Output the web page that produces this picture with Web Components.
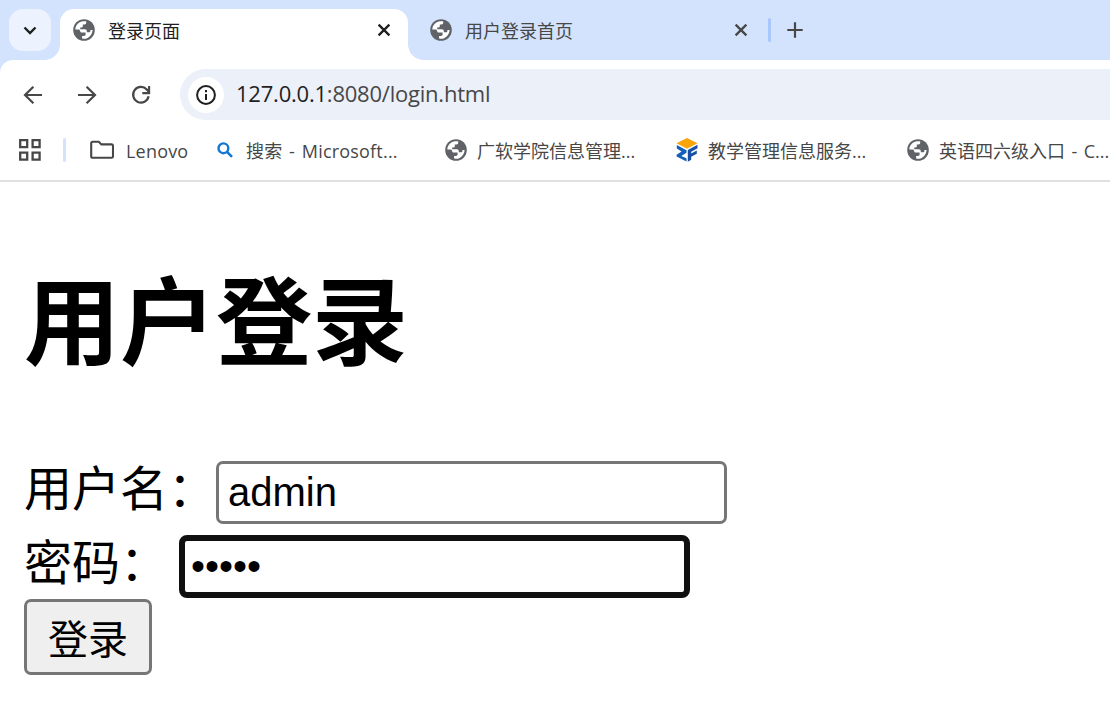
<!DOCTYPE html>
<html lang="zh-CN">
<head>
<meta charset="utf-8">
<title>登录页面</title>
<style>
    body {
        margin: 0;
        background: #fff;
        overflow: hidden;
        font-family: "Open Sans", "Noto Sans CJK SC", sans-serif;
    }
</style>
</head>
<body>
<browser-window>
    <tab-strip slot="tabs">
        <browser-tab active>登录页面</browser-tab>
        <browser-tab>用户登录首页</browser-tab>
    </tab-strip>
    <address-bar slot="toolbar" host="127.0.0.1" path=":8080/login.html"></address-bar>
    <bookmark-bar slot="bookmarks">
        <bookmark-item icon="folder" style="width: 127px; letter-spacing: .2px">Lenovo</bookmark-item>
        <bookmark-item icon="search" style="width: 228px; letter-spacing: .2px">搜索 - Microsoft...</bookmark-item>
        <bookmark-item icon="globe" style="width: 231px">广软学院信息管理...</bookmark-item>
        <bookmark-item icon="zf" style="width: 231px">教学管理信息服务...</bookmark-item>
        <bookmark-item icon="globe" style="width: 220px">英语四六级入口 - C...</bookmark-item>
    </bookmark-bar>
    <login-page></login-page>
</browser-window>

<script>
// Every icon is drawn in its own viewBox at its real pixel size
const ICONS = {
    chevron: [42, 42, '<path d="M15.5 18.5l5.5 5.5 5.5-5.5" fill="none" stroke="#1f1f1f" stroke-width="2.4"/>'],
    globe: [22, 22, `<circle cx="11" cy="11" r="10.8" fill="#5f6368"/>
        <path d="M2.3 10.4C2.6 6 6 2.5 10.3 2.3h2.9v1.4c0 1-.7 1.7-1.7 1.7h-1.7v1.8c0 .8-.6 1.2-1.3 1.2H7.2v1.8h4.6c1.3 0 2 .8 2 2v1.1h2.1c.9 0 1.5-.6 1.5-1.4v-1h2.2c-.4 5-4 8.8-8.5 8.8-.6 0-1.3-.1-2-.3v-2.5h1.7c1.2 0 1.8-.8 1.8-1.7v-1.7H8.9c-1 0-1.7-.7-1.7-1.6l-.9-1.3z" fill="#fff"/>`],
    close: [16, 16, '<path d="M2.6 2.6l10.8 10.8M13.4 2.6L2.6 13.4" stroke="currentColor" stroke-width="2.3"/>'],
    plus: [16, 16, '<path d="M8 .3v15.4M.3 8h15.4" stroke="#474747" stroke-width="2.2"/>'],
    back: [20, 20, '<path d="M19 10H2.5M10.4 1.7L2 10l8.4 8.3" fill="none" stroke="#474747" stroke-width="2.2"/>'],
    forward: [20, 20, '<path d="M1 10h16.5M9.6 1.7L18 10l-8.4 8.3" fill="none" stroke="#474747" stroke-width="2.2"/>'],
    reload: [20, 20, '<path d="M17.6 11.3A7.8 7.8 0 1 1 15.8 4.6L18 7" fill="none" stroke="#474747" stroke-width="2.2"/><path d="M18.1 1v7.1H11.3" fill="none" stroke="#474747" stroke-width="2.1"/>'],
    info: [20, 20, '<circle cx="10" cy="10" r="8.9" fill="none" stroke="#1f1f1f" stroke-width="2"/><path d="M10 9v6M10 5v2.2" stroke="#1f1f1f" stroke-width="2"/>'],
    apps: [22, 22, '<path d="M1.2 1.2h7v7h-7zM13.6 1.2h7v7h-7zM1.2 13.6h7v7h-7zM13.6 13.6h7v7h-7z" fill="none" stroke="#474747" stroke-width="2.3"/>'],
    folder: [24, 20, '<path d="M2.6 1.8h6.2l2.600 2.600h10.200q1.400 0 1.400 1.400v10.600q0 1.400-1.400 1.400H2.600q-1.400 0-1.400-1.400V3.200q0-1.400 1.400-1.400z" fill="none" stroke="#474747" stroke-width="2.1"/>'],
    search: [16, 16, '<circle cx="6.4" cy="6.3" r="4.9" fill="none" stroke="#1477d1" stroke-width="2.4"/><path d="M10 9.900l5 5" stroke="#1477d1" stroke-width="2.7"/>'],
    zf: [22, 24, `<path d="M11 0l10.500 5.200L11 10.800.5 5.200z" fill="#f9a408"/>
        <path d="M.8 7l9.700 5.200v2.600L5.300 18l5.200 2.200v3.300L.6 18.400v-1.700l5-3.200L.8 10.400z" fill="#1260b8"/>
        <path d="M21.500 6.800v3.500l-6.300 3.500v1.700l5.600-3v3.300l-5.600 3v3l-3.400 2V12z" fill="#174fa5"/>`]
};

class UiIcon extends HTMLElement {
    constructor() {
        super();
        this.attachShadow({ mode: 'open' });
    }

    connectedCallback() {
        const [width, height, shapes] = ICONS[this.getAttribute('name')];
        this.shadowRoot.innerHTML = `
        <style>
            :host { display: block; flex: none; }
            svg { display: block; }
        </style>
        <svg width="${width}" height="${height}" viewBox="0 0 ${width} ${height}">${shapes}</svg>`;
    }
}

class BrowserWindow extends HTMLElement {
    constructor() {
        super();
        this.attachShadow({ mode: 'open' });
        this.shadowRoot.innerHTML = `
        <style>
            :host { display: block; width: 1110px; height: 725px; overflow: hidden; }
            .chrome { background: #d3e3fd; }
            .bars {
                height: 120px;
                background: #fff;
                border-top-left-radius: 13px;
                border-bottom: 2px solid #e0e0e0;
                box-sizing: content-box;
            }
        </style>
        <div class="chrome">
            <slot name="tabs"></slot>
            <div class="bars">
                <slot name="toolbar"></slot>
                <slot name="bookmarks"></slot>
            </div>
        </div>
        <slot></slot>`;
    }
}

class TabStrip extends HTMLElement {
    constructor() {
        super();
        this.attachShadow({ mode: 'open' });
        this.shadowRoot.innerHTML = `
        <style>
            :host { display: flex; align-items: flex-start; height: 51px; padding: 9px 0 0 9px; }
            .search { width: 42px; height: 42px; margin-right: 9px; border-radius: 14px; background: #ecf2fe; }
            .divider { width: 3px; height: 24px; margin: 9px 16px 0 11px; border-radius: 2px; background: #a8c7fa; }
            .plus { margin-top: 13px; }
        </style>
        <div class="search"><ui-icon name="chevron"></ui-icon></div>
        <slot></slot>
        <div class="divider"></div>
        <ui-icon class="plus" name="plus"></ui-icon>`;
    }
}

class BrowserTab extends HTMLElement {
    constructor() {
        super();
        this.attachShadow({ mode: 'open' });
        this.shadowRoot.innerHTML = `
        <style>
            :host {
                display: flex;
                align-items: center;
                box-sizing: border-box;
                width: 348px;
                height: 51px;
                padding: 0 16px 9px 13px;
                font-size: 18px;
                line-height: 24px;
                color: #474747;
            }
            :host([active]) {
                background: #fff;
                border-radius: 14px 14px 0 0;
                color: #1f1f1f;
                position: relative;
            }
            :host(:not([active])) { padding: 0 8px 9px 22px; width: 349px; }
            .label { flex: 1; margin-left: 13px; padding-top: 2px; white-space: nowrap; }
            /* flared feet of the active tab */
            :host([active])::before, :host([active])::after {
                content: "";
                position: absolute;
                bottom: 0;
                width: 15px;
                height: 15px;
            }
            :host([active])::before {
                left: -15px;
                background: radial-gradient(circle at 0 0, transparent 14.5px, #fff 15px);
            }
            :host([active])::after {
                right: -15px;
                background: radial-gradient(circle at 100% 0, transparent 14.5px, #fff 15px);
            }
        </style>
        <ui-icon name="globe"></ui-icon>
        <span class="label"><slot></slot></span>
        <ui-icon name="close"></ui-icon>`;
    }
}

class AddressBar extends HTMLElement {
    constructor() {
        super();
        this.attachShadow({ mode: 'open' });
    }

    connectedCallback() {
        this.shadowRoot.innerHTML = `
        <style>
            :host { display: flex; align-items: center; height: 51px; padding: 9px 0 0 23px; }
            .forward { margin: 0 34px; }
            .pill {
                display: flex;
                align-items: center;
                flex: 1;
                height: 51px;
                margin-left: 29px;
                padding-left: 8px;
                border-radius: 26px 0 0 26px;
                background: #ebf0f9;
            }
            .info {
                display: grid;
                place-items: center;
                width: 36px;
                height: 36px;
                border-radius: 50%;
                background: #fff;
            }
            .url {
                margin-left: 12px;
                padding-bottom: 3px;
                font-size: 22px;
                line-height: 30px;
                letter-spacing: -.22px;
                color: #474747;
                white-space: nowrap;
            }
            .host { color: #1f1f1f; }
        </style>
        <ui-icon name="back"></ui-icon>
        <ui-icon class="forward" name="forward"></ui-icon>
        <ui-icon name="reload"></ui-icon>
        <div class="pill">
            <div class="info"><ui-icon name="info"></ui-icon></div>
            <div class="url"><span class="host">${this.getAttribute('host')}</span>${this.getAttribute('path')}</div>
        </div>`;
    }
}

class BookmarkBar extends HTMLElement {
    constructor() {
        super();
        this.attachShadow({ mode: 'open' });
        this.shadowRoot.innerHTML = `
        <style>
            :host { display: flex; align-items: center; height: 60px; padding-left: 19px; }
            .divider { flex: none; width: 3px; height: 24px; margin: 0 24px 0 22px; border-radius: 2px; background: #d3e3fd; }
        </style>
        <ui-icon name="apps"></ui-icon>
        <div class="divider"></div>
        <slot></slot>`;
    }
}

class BookmarkItem extends HTMLElement {
    constructor() {
        super();
        this.attachShadow({ mode: 'open' });
    }

    connectedCallback() {
        const icon = this.getAttribute('icon');
        const gap = { folder: 12, search: 13, globe: 10, zf: 10 }[icon];
        this.shadowRoot.innerHTML = `
        <style>
            :host {
                display: flex;
                align-items: center;
                flex: none;
                font-size: 18px;
                line-height: 24px;
                word-spacing: 1.8px;
                color: #474747;
            }
            .label { margin-left: ${gap}px; padding-top: 2px; white-space: nowrap; }
        </style>
        <ui-icon name="${icon}"></ui-icon>
        <span class="label"><slot></slot></span>`;
    }
}

class LoginField extends HTMLElement {
    constructor() {
        super();
        this.attachShadow({ mode: 'open' });
    }

    connectedCallback() {
        this.shadowRoot.innerHTML = `
        <style>
            :host { display: flex; height: 74px; }
            label { font-size: 48px; line-height: 48px; white-space: pre; }
            input {
                box-sizing: border-box;
                width: 511px;
                height: 63px;
                margin: 0;
                padding: 0 9px;
                border: 3px solid #767676;
                border-radius: 7px;
                outline: none;
                background: #fff;
                color: #000;
                font: 40px "Liberation Sans", Arial, sans-serif;
            }
            input[type="password"] { margin-left: 11px; padding: 0 6px; border: 6px solid #101010; border-radius: 8px; }
        </style>
        <label for="field">${this.getAttribute('label')}</label>
        <input id="field" type="${this.getAttribute('type')}" value="${this.getAttribute('value')}">`;
    }
}

class LoginPage extends HTMLElement {
    constructor() {
        super();
        this.attachShadow({ mode: 'open' });
        this.shadowRoot.innerHTML = `
        <style>
            :host {
                display: block;
                padding: 82px 24px 0;
                color: #000;
                font-family: "Noto Sans CJK SC", sans-serif;
            }
            h1 { margin: 0 0 93px; font-size: 96px; line-height: 104px; font-weight: bold; }
            button {
                box-sizing: border-box;
                display: block;
                width: 128px;
                height: 76px;
                margin-top: -10px;
                padding: 0;
                border: 3px solid #767676;
                border-radius: 7px;
                background: #efefef;
                color: #000;
                font: 40px "Noto Sans CJK SC", sans-serif;
                line-height: 68px;
            }
        </style>
        <h1>用户登录</h1>
        <form>
            <login-field label="用户名：" type="text" value="admin"></login-field>
            <login-field label="密码：" type="password" value="admin"></login-field>
            <button type="button">登录</button>
        </form>`;
    }
}

customElements.define('ui-icon', UiIcon);
customElements.define('browser-window', BrowserWindow);
customElements.define('tab-strip', TabStrip);
customElements.define('browser-tab', BrowserTab);
customElements.define('address-bar', AddressBar);
customElements.define('bookmark-bar', BookmarkBar);
customElements.define('bookmark-item', BookmarkItem);
customElements.define('login-field', LoginField);
customElements.define('login-page', LoginPage);
</script>
</body>
</html>
